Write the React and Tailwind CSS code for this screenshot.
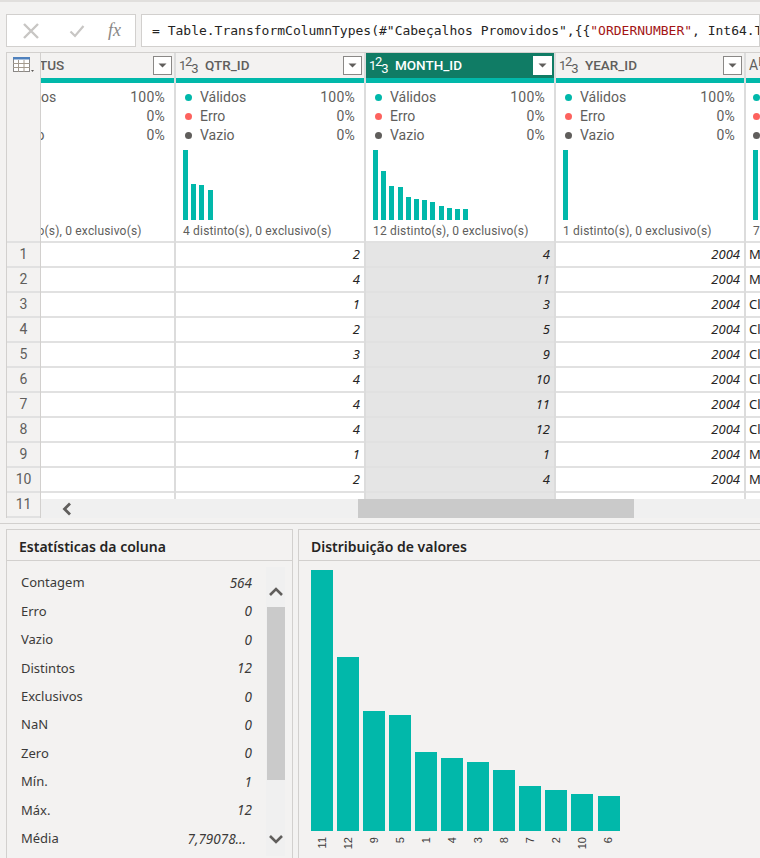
const TEAL = 'bg-[#01b8aa]'

const statusRows = [
  { dot: 'bg-[#01b8aa]', label: 'Válidos', pct: '100%' },
  { dot: 'bg-[#fd625e]', label: 'Erro', pct: '0%' },
  { dot: 'bg-[#605e5c]', label: 'Vazio', pct: '0%' },
]

const stats = [
  ['Contagem', '564'],
  ['Erro', '0'],
  ['Vazio', '0'],
  ['Distintos', '12'],
  ['Exclusivos', '0'],
  ['NaN', '0'],
  ['Zero', '0'],
  ['Mín.', '1'],
  ['Máx.', '12'],
  ['Média', '7,79078...'],
]

const distribution = [
  ['11', 261], ['12', 174], ['9', 120], ['5', 116], ['1', 79], ['4', 73],
  ['3', 69], ['8', 61], ['7', 45], ['2', 41], ['10', 37], ['6', 35],
]

const qtr = [2, 4, 1, 2, 3, 4, 4, 4, 1, 2, 1]
const month = [4, 11, 3, 5, 9, 10, 11, 12, 1, 4, 11]
const year = Array(11).fill(2004)
const size = ['M', 'M', 'Cl', 'Cl', 'Cl', 'Cl', 'Cl', 'Cl', 'M', 'M', 'M']

function TypeIcon({ selected }) {
  return (
    <span className={`w-[21px] shrink-0 text-[13px] leading-none whitespace-nowrap tracking-[-1.2px] ${selected ? 'text-white' : 'text-[#605e5c]'}`}>
      1<span className="relative top-[-4px]">2</span><span className="relative top-[3px]">3</span>
    </span>
  )
}

function FilterButton({ selected }) {
  return (
    <span className={`w-[19px] h-[19px] shrink-0 flex items-center justify-center bg-white border ${selected ? 'border-white' : 'border-[#8a8886]'}`}>
      <svg width="9" height="5" viewBox="0 0 9 5"><path d="M0.5 0.5h8L4.5 4.5z" fill="#605e5c" /></svg>
    </span>
  )
}

function Column({ name, bars, distinct, values, selected }) {
  return (
    <div className="w-[190px] shrink-0 flex flex-col border-r-2 border-[#dcdcdc]">
      <div className={`h-[25px] shrink-0 pl-[3px] pr-[2px] flex items-center ${selected ? 'bg-[#107c65]' : 'bg-[#f3f2f1]'}`}>
        <TypeIcon selected={selected} />
        <span className={`ml-[5px] flex-1 text-[13.5px] font-medium ${selected ? 'text-white' : 'text-[#605e5c]'}`}>{name}</span>
        <FilterButton selected={selected} />
      </div>
      <div className={`h-[5px] shrink-0 ${TEAL}`} />
      <div className="h-[158px] shrink-0 bg-white pt-[5px] pl-[7px] pr-[9px] text-[14px] text-[#605e5c] flex flex-col">
        {statusRows.map(s => (
          <div key={s.label} className="h-[19px] flex items-center">
            <span className={`w-[7px] h-[7px] rounded-full ml-[2px] mr-[8px] ${s.dot}`} />
            <span className="flex-1">{s.label}</span>
            <span className="tracking-[0.25px]">{s.pct}</span>
          </div>
        ))}
        <div className="h-[70px] mt-[5px] flex items-end gap-[3.2px] shrink-0">
          {bars.map((h, i) => (
            <div key={i} className={`w-[5px] ${TEAL}`} style={{ height: h }} />
          ))}
        </div>
        <div className="mt-[3px] text-[12px] leading-[16px] tracking-[0.18px] whitespace-nowrap">{distinct}</div>
      </div>
      {values.map((v, i) => (
        <div key={i} className={`h-[25px] shrink-0 pr-[4px] flex items-center justify-end border-t-2 border-[#e1e1e1] font-['Noto_Sans',sans-serif] text-[13px] italic text-[#252423] ${selected ? 'bg-[#e5e5e5]' : 'bg-white'}`}>
          {v}
        </div>
      ))}
    </div>
  )
}

function Chevron({ dir, color = '#605e5c', w = 14 }) {
  const paths = {
    up: 'M1 8 L7 2 L13 8',
    down: 'M1 2 L7 8 L13 2',
  }
  return (
    <svg width={w} height="10" viewBox="0 0 14 10">
      <path d={paths[dir]} fill="none" stroke={color} strokeWidth="2.6" />
    </svg>
  )
}

export default function App() {
  return (
    <div className="w-[760px] h-[858px] overflow-hidden bg-[#f3f2f1] border-t-2 border-[#e1dfdd] font-['Noto_Sans',sans-serif] flex flex-col">
      {/* Barra de fórmulas */}
      <div className="h-[33px] mt-3 ml-[6px] flex gap-[5px] shrink-0">
        <div className="w-[130px] bg-white border border-[#d2d0ce] flex items-center pl-[15px]">
          <svg width="18" height="18" viewBox="0 0 18 18"><path d="M2 2l14 14M16 2L2 16" stroke="#c8c6c4" strokeWidth="2.4" /></svg>
          <svg className="ml-[29px]" width="16" height="14" viewBox="0 0 16 14"><path d="M1.5 7.5l4.5 4.5L14.5 2" fill="none" stroke="#c8c6c4" strokeWidth="2.2" /></svg>
          <span className="ml-[23px] font-['Liberation_Serif',serif] italic text-[18px] text-[#8a8886]">fx</span>
        </div>
        <div className="flex-1 bg-white border border-[#d2d0ce] pl-[10px] flex items-center overflow-hidden font-['DejaVu_Sans_Mono',monospace] text-[13px] whitespace-nowrap text-[#252423]">
          <span>= Table.TransformColumnTypes(#"Cabeçalhos Promovidos",{'{{'}<span className="text-[#a31515]">"ORDERNUMBER"</span>, Int64.Type}</span>
        </div>
      </div>

      {/* Grade */}
      <div className="mt-[5px] ml-[6px] flex h-[466px] shrink-0 border-t border-[#d2d0ce] font-['Roboto',sans-serif]">
        <div className="w-[35px] shrink-0 flex flex-col bg-[#f3f2f1] border-l border-r border-[#d2d0ce] overflow-hidden">
          <div className="h-[25px] shrink-0 pl-[6px] pt-[4px] flex">
            <svg width="21" height="16" viewBox="0 0 21 16">
              <rect x="0.5" y="0.5" width="16" height="14" fill="#fff" stroke="#8a8886" />
              <rect x="0" y="0" width="17" height="2.5" fill="#4f81bd" />
              <path d="M0 6.5h17M0 10.5h17M5.5 3v12M11 3v12" stroke="#a39a8e" />
              <path d="M18 13h3l-1.5 2z" fill="#605e5c" />
            </svg>
          </div>
          <div className="h-[163px] shrink-0" />
          {Array.from({ length: 11 }, (_, i) => (
            <div key={i} className="h-[25px] shrink-0 border-t-2 border-[#e1e1e1] flex items-center justify-center text-[14px] text-[#605e5c]">
              {i + 1}
            </div>
          ))}
          <div className="h-[2px] shrink-0 border-t-2 border-[#e1e1e1]" />
        </div>

        <div className="flex-1 min-w-0 flex flex-col">
          <div className="h-[446px] shrink-0 flex overflow-hidden">
            {/* STATUS fica cortada pela rolagem */}
            <div className="w-[135px] shrink-0 flex justify-end overflow-hidden">
              <Column name="STATUS" bars={[]} distinct="6 distinto(s), 0 exclusivo(s)" values={Array(11).fill('')} />
            </div>
            <Column name="QTR_ID" bars={[70, 36, 35, 30]} distinct="4 distinto(s), 0 exclusivo(s)" values={qtr} />
            <Column name="MONTH_ID" selected bars={[70, 49, 34, 33, 23, 21, 20, 18, 14, 12, 11, 11]} distinct="12 distinto(s), 0 exclusivo(s)" values={month} />
            <Column name="YEAR_ID" bars={[70]} distinct="1 distinto(s), 0 exclusivo(s)" values={year} />
            <div className="flex-1 min-w-0 flex flex-col overflow-hidden">
              <div className="h-[25px] shrink-0 bg-[#f3f2f1] pl-[3px] text-[14px] text-[#605e5c] leading-[25px] whitespace-nowrap">A<span className="relative top-[-4px] text-[12px]">B</span></div>
              <div className={`h-[5px] shrink-0 ${TEAL}`} />
              <div className="h-[158px] shrink-0 bg-white pt-[5px] pl-[7px] overflow-hidden text-[14px]">
                {statusRows.map(s => (
                  <div key={s.label} className="h-[19px] flex items-center">
                    <span className={`w-[7px] h-[7px] rounded-full shrink-0 ${s.dot}`} />
                  </div>
                ))}
                <div className={`mt-[5px] w-[5px] h-[70px] ${TEAL}`} />
                <div className="mt-[3px] text-[12px] leading-[16px] text-[#605e5c]">7</div>
              </div>
              {size.map((v, i) => (
                <div key={i} className="h-[25px] shrink-0 bg-white border-t-2 border-[#e1e1e1] pl-[3px] flex items-center text-[13px] text-[#252423] font-['Noto_Sans',sans-serif]">
                  {v}
                </div>
              ))}
            </div>
          </div>
          {/* Rolagem horizontal */}
          <div className="h-[19px] shrink-0 bg-[#f0f0f0] flex items-center">
            <span className="ml-[21px] flex">
              <svg width="10" height="14" viewBox="0 0 10 14"><path d="M8 1.5L2.5 7 8 12.5" fill="none" stroke="#605e5c" strokeWidth="2.8" /></svg>
            </span>
            <div className="ml-[286px] w-[276px] h-[19px] bg-[#cacaca]" />
          </div>
        </div>
      </div>

      <div className="mt-[5px] h-[1px] shrink-0 bg-[#d2d0ce]" />

      {/* Painéis inferiores */}
      <div className="mt-[5px] flex-1 min-h-0 flex pl-[6px] gap-[5px]">
        <section className="w-[287px] shrink-0 border-x border-t border-[#d2d0ce] flex flex-col">
          <h2 className="h-[31px] shrink-0 pl-[12px] pt-[3px] flex items-center border-b border-[#d2d0ce] text-[14px] font-semibold text-[#252423]">
            Estatísticas da coluna
          </h2>
          <div className="flex-1 min-h-0 flex pt-[6px] pl-[14px] pr-[6px]">
            <div className="w-[231px] shrink-0 pt-[2px] text-[13px] text-[#3b3a39]">
              {stats.map(([label, value]) => (
                <div key={label} className="h-[28.4px] flex items-center justify-between">
                  <span>{label}</span>
                  <span className={`italic text-[13.5px] ${label === 'Média' ? 'mr-[6px]' : ''}`}>{value}</span>
                </div>
              ))}
            </div>
            <div className="ml-[14px] w-[19px] h-[289px] bg-[#f0f0f0] flex flex-col items-center">
              <span className="mt-[20px] h-[20px] flex"><Chevron dir="up" /></span>
              <div className="w-[18px] h-[173px] bg-[#cacaca]" />
              <span className="mt-[54px] flex"><Chevron dir="down" /></span>
            </div>
          </div>
        </section>

        <section className="flex-1 min-w-0 border-l border-t border-[#d2d0ce] flex flex-col">
          <h2 className="h-[31px] shrink-0 pl-[12px] pt-[3px] flex items-center border-b border-[#d2d0ce] text-[14px] font-semibold text-[#252423]">
            Distribuição de valores
          </h2>
          <div className="pl-[12px] pt-[9px] flex gap-[4.05px] h-[297px]">
            {distribution.map(([label, h]) => (
              <div key={label} className="w-[22px] shrink-0 flex flex-col items-center">
                <div className="h-[261px] w-full flex items-end">
                  <div className={`w-full ${TEAL}`} style={{ height: h }} />
                </div>
                <span className="mt-[6px] [writing-mode:vertical-rl] rotate-180 font-['Liberation_Sans',sans-serif] text-[11px] leading-none text-[#3b3a39]">{label}</span>
              </div>
            ))}
          </div>
        </section>
      </div>
    </div>
  )
}
